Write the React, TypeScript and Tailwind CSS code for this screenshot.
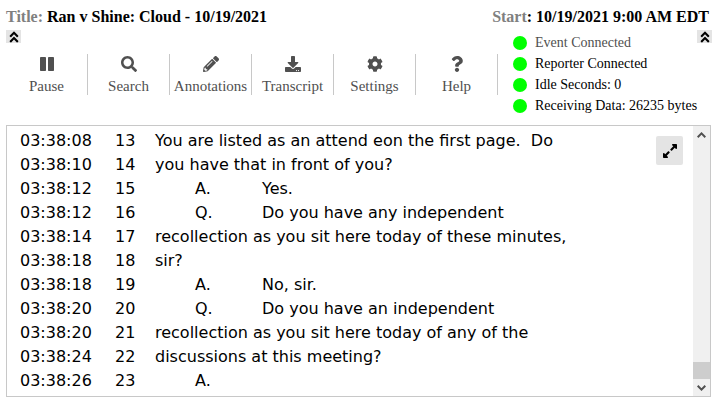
import React, { useState } from "react";
import {
  FaAngleDoubleUp,
  FaCog,
  FaDownload,
  FaExpandAlt,
  FaPencilAlt,
  FaQuestion,
  FaSearch
} from "react-icons/fa";

type Line = {
  time: string;
  num: number;
  speaker?: string;
  text: string;
};

const PauseIcon = ({ className }: { className?: string }) => (
  <svg viewBox="0 0 16 16" className={className} fill="currentColor">
    <rect x="1" y="1" width="6" height="14" rx="0.8" />
    <rect x="9" y="1" width="6" height="14" rx="0.8" />
  </svg>
);

const tools = [
  { label: "Pause", icon: PauseIcon },
  { label: "Search", icon: FaSearch },
  { label: "Annotations", icon: FaPencilAlt },
  { label: "Transcript", icon: FaDownload },
  { label: "Settings", icon: FaCog },
  { label: "Help", icon: FaQuestion }
];

const statuses = [
  { label: "Event Connected", color: "text-[#505050]" },
  { label: "Reporter Connected", color: "text-black" },
  { label: "Idle Seconds: 0", color: "text-black" },
  { label: "Receiving Data: 26235 bytes", color: "text-black" }
];

const lines: Line[] = [
  { time: "03:38:08", num: 13, text: "You are listed as an attend eon the first page.  Do" },
  { time: "03:38:10", num: 14, text: "you have that in front of you?" },
  { time: "03:38:12", num: 15, speaker: "A.", text: "Yes." },
  { time: "03:38:12", num: 16, speaker: "Q.", text: "Do you have any independent" },
  { time: "03:38:14", num: 17, text: "recollection as you sit here today of these minutes," },
  { time: "03:38:18", num: 18, text: "sir?" },
  { time: "03:38:18", num: 19, speaker: "A.", text: "No, sir." },
  { time: "03:38:20", num: 20, speaker: "Q.", text: "Do you have an independent" },
  { time: "03:38:20", num: 21, text: "recollection as you sit here today of any of the" },
  { time: "03:38:24", num: 22, text: "discussions at this meeting?" },
  { time: "03:38:26", num: 23, speaker: "A.", text: "" }
];

const CollapseButton = ({ label, onClick }: { label: string; onClick: () => void }) => (
  <button
    aria-label={label}
    onClick={onClick}
    className="flex h-[13px] w-[15px] shrink-0 items-center justify-center bg-[#e4e4e4] text-black"
  >
    <FaAngleDoubleUp className="h-[14px] w-[14px]" />
  </button>
);

const Scrollbar = () => (
  <div className="flex w-[17px] shrink-0 flex-col bg-[#f0f0f0] text-[#505050]">
    <button aria-label="Scroll up" className="flex h-[17px] items-center justify-center">
      <svg viewBox="0 0 9 6" className="h-[6px] w-[9px]" fill="none" stroke="currentColor" strokeWidth="2">
        <path d="M0.7 5.2 4.5 1.4 8.3 5.2" />
      </svg>
    </button>
    <div className="flex flex-1 flex-col justify-end">
      <div className="h-[17px] bg-[#cdcdcd]"></div>
    </div>
    <button aria-label="Scroll down" className="flex h-[17px] items-center justify-center">
      <svg viewBox="0 0 9 6" className="h-[6px] w-[9px]" fill="none" stroke="currentColor" strokeWidth="2">
        <path d="M0.7 0.8 4.5 4.6 8.3 0.8" />
      </svg>
    </button>
  </div>
);

export default function App() {
  const [showTools, setShowTools] = useState(true);
  const [showStatus, setShowStatus] = useState(true);

  return (
    <div className="bg-white px-1.5 pt-1.5 pb-3 font-['Liberation_Serif',serif] text-black">
      <header className="flex justify-between text-[16px] leading-[22px] font-bold">
        <h1>
          <span className="text-[#808080]">Title:</span> Ran v Shine: Cloud - 10/19/2021
        </h1>
        <p className="pr-0.5">
          <span className="text-[#808080]">Start</span>: 10/19/2021 9:00 AM EDT
        </p>
      </header>

      <div className="flex min-h-[97px] items-start">
        <div className="pt-0.5">
          <CollapseButton label="Toggle toolbar" onClick={() => setShowTools(!showTools)} />
          {showTools && (
            <nav className="mt-[11px] flex">
              {tools.map(({ label, icon: Icon }) => (
                <button
                  key={label}
                  className="flex h-[41px] w-[82px] flex-col items-center border-r border-[#c8c8c8] pt-0.5 text-[15px] leading-[18px] text-[#505050]"
                >
                  <Icon className="mb-[5px] h-4 w-4 shrink-0" />
                  {label}
                </button>
              ))}
            </nav>
          )}
        </div>
        {showStatus && (
          <ul className="ml-[15px] pt-1">
            {statuses.map((s) => (
              <li
                key={s.label}
                className={`flex items-center gap-2 text-[14px] leading-[21px] whitespace-nowrap ${s.color}`}
              >
                <span className="h-3.5 w-3.5 rounded-full bg-[#00ff00]"></span>
                {s.label}
              </li>
            ))}
          </ul>
        )}
        <div className="ml-auto pt-0.5">
          <CollapseButton label="Toggle status" onClick={() => setShowStatus(!showStatus)} />
        </div>
      </div>

      <main className="relative flex border border-[#c8c8c8]">
        <div className="flex-1 py-[3px] pl-[13px] font-['DejaVu_Sans',sans-serif] text-base leading-6">
          {lines.map((line) => (
            <div key={line.num} className="flex whitespace-pre">
              <span className="w-[95px]">{line.time}</span>
              <span className="w-10">{line.num}</span>
              {line.speaker && <span className="ml-10 w-[67px]">{line.speaker}</span>}
              <span>{line.text}</span>
            </div>
          ))}
        </div>
        {/* Floats over the transcript text */}
        <button
          aria-label="Expand transcript"
          className="absolute top-2.5 right-[27px] flex h-[29px] w-[27px] items-center justify-center rounded-xs bg-[#e4e4e4]"
        >
          <FaExpandAlt className="h-4 w-4" />
        </button>
        <Scrollbar />
      </main>
    </div>
  );
}
